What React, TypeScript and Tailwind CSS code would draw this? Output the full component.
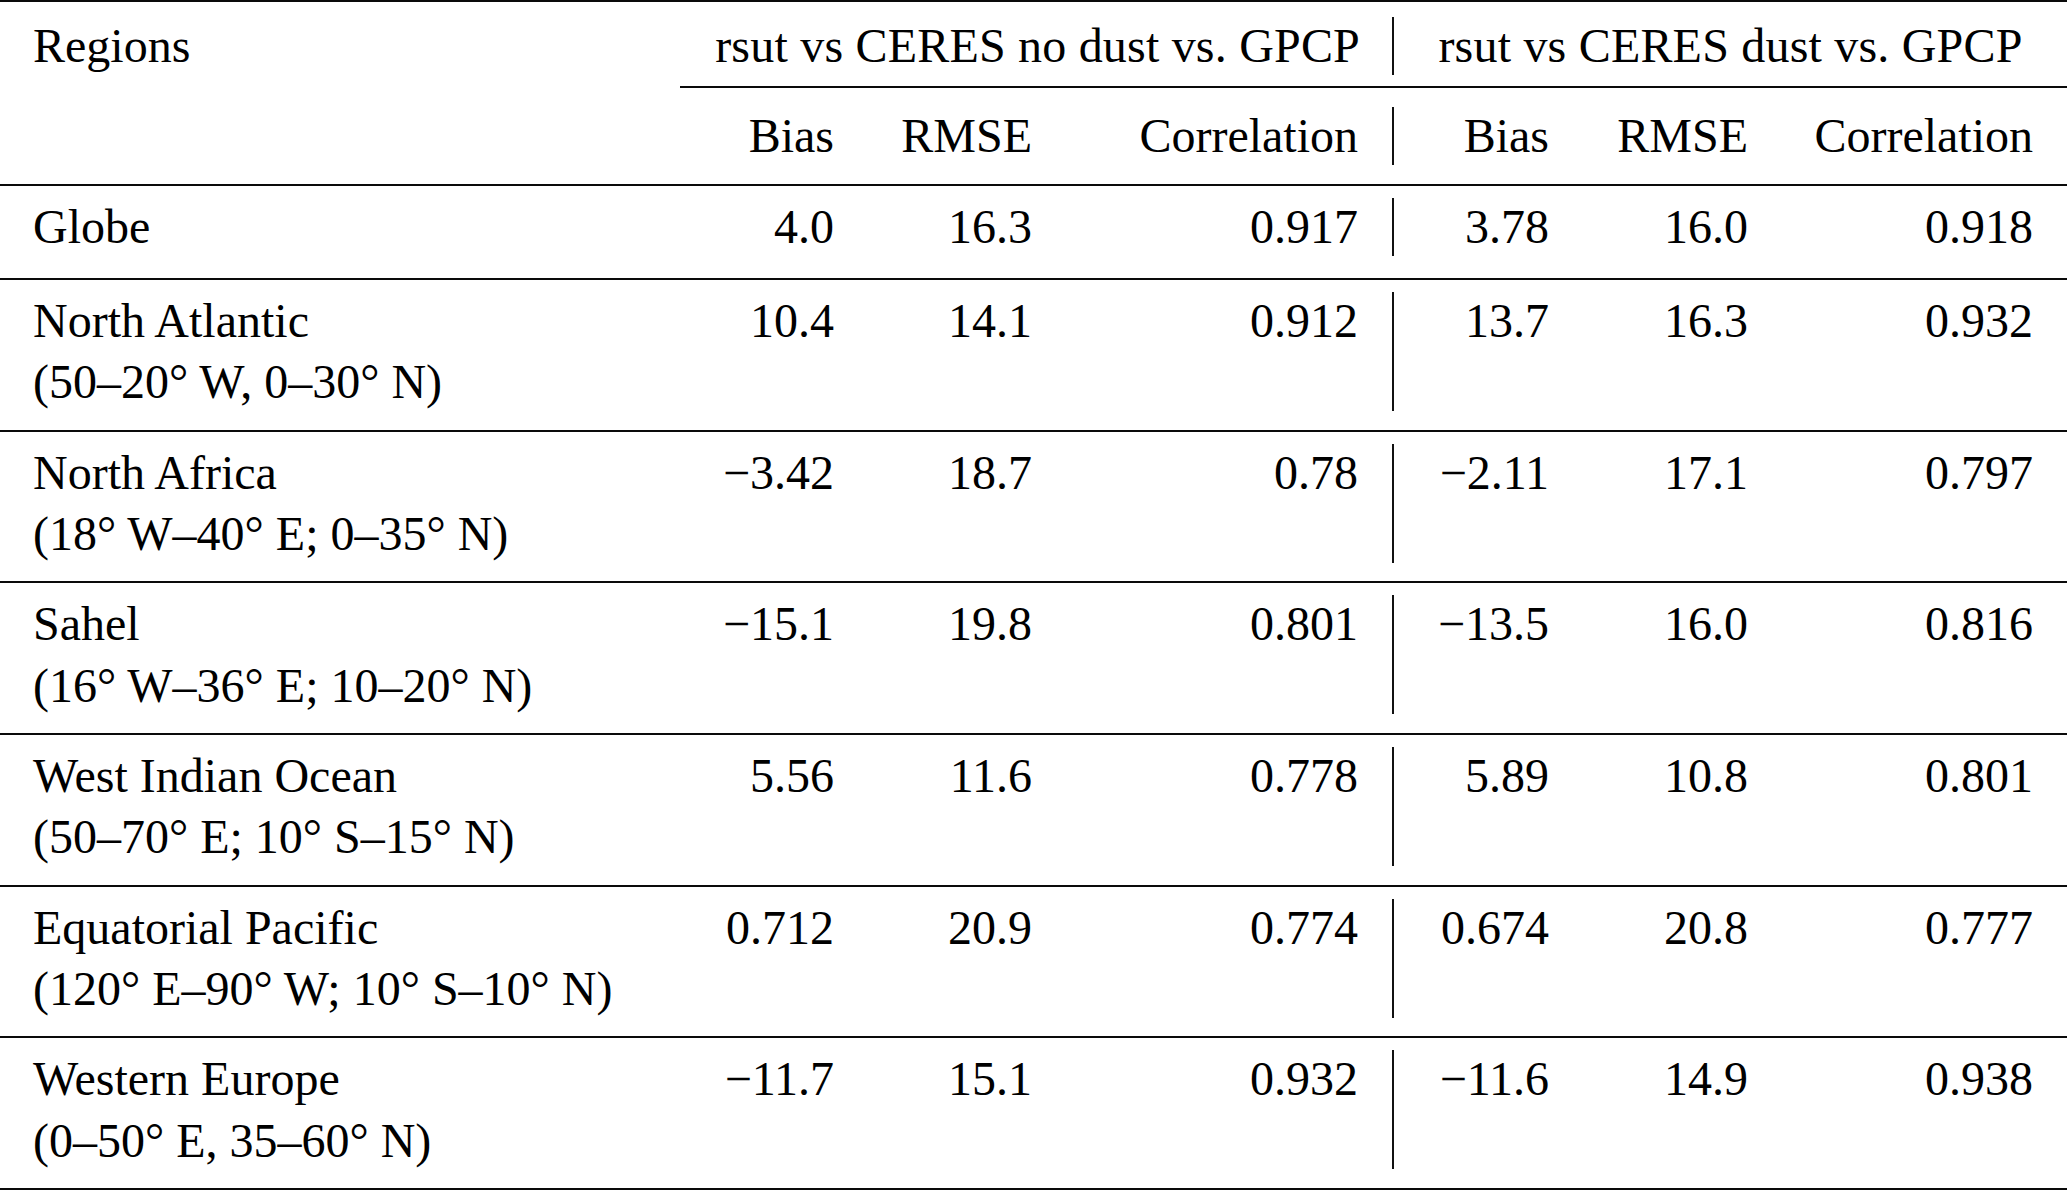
import React from "react";

type Row = {
  name: string;
  sub?: string;
  a: [string, string, string];
  b: [string, string, string];
};

const rows: Row[] = [
  { name: "Globe", a: ["4.0", "16.3", "0.917"], b: ["3.78", "16.0", "0.918"] },
  { name: "North Atlantic", sub: "(50–20° W, 0–30° N)", a: ["10.4", "14.1", "0.912"], b: ["13.7", "16.3", "0.932"] },
  { name: "North Africa", sub: "(18° W–40° E; 0–35° N)", a: ["−3.42", "18.7", "0.78"], b: ["−2.11", "17.1", "0.797"] },
  { name: "Sahel", sub: "(16° W–36° E; 10–20° N)", a: ["−15.1", "19.8", "0.801"], b: ["−13.5", "16.0", "0.816"] },
  { name: "West Indian Ocean", sub: "(50–70° E; 10° S–15° N)", a: ["5.56", "11.6", "0.778"], b: ["5.89", "10.8", "0.801"] },
  { name: "Equatorial Pacific", sub: "(120° E–90° W; 10° S–10° N)", a: ["0.712", "20.9", "0.774"], b: ["0.674", "20.8", "0.777"] },
  { name: "Western Europe", sub: "(0–50° E, 35–60° N)", a: ["−11.7", "15.1", "0.932"], b: ["−11.6", "14.9", "0.938"] },
];

function Rule() {
  return <div className="h-[2px] w-full bg-[#0a0a0a]" />;
}

export default function App() {
  return (
    <div className="w-[2067px] h-[1190px] bg-white text-black font-['Liberation_Serif','Times_New_Roman',serif] text-[48px] leading-[57.67px] overflow-hidden">
      <Rule />
      {/* header */}
      <div className="flex">
        <div className="w-[680px] pl-[33px] pt-[15px]">Regions</div>
        <div className="flex-1 flex flex-col">
          <div className="grid grid-cols-[680px_32px_2px_673px] pt-[15px] pb-[11.33px]">
            <div className="text-right whitespace-nowrap tracking-[0.2px]">rsut vs CERES no dust vs. GPCP</div>
            <div />
            <div className="bg-[#111]" />
            <div className="text-center whitespace-nowrap tracking-[0.2px]">rsut vs CERES dust vs. GPCP</div>
          </div>
          <Rule />
          <div className="grid grid-cols-[154px_198px_326px_34px_2px_155px_199px_285px_34px] pt-[19px] pb-[19.33px]">
            <div className="text-right">Bias</div>
            <div className="text-right">RMSE</div>
            <div className="text-right">Correlation</div>
            <div />
            <div className="bg-[#111]" />
            <div className="text-right">Bias</div>
            <div className="text-right">RMSE</div>
            <div className="text-right">Correlation</div>
            <div />
          </div>
        </div>
      </div>
      <Rule />
      {rows.map((r) => (
        <React.Fragment key={r.name}>
          <div
            className={
              r.sub
                ? "grid grid-cols-[680px_154px_198px_326px_34px_2px_155px_199px_285px_34px] pt-[12px] pb-[18.83px]"
                : "grid grid-cols-[680px_154px_198px_326px_34px_2px_155px_199px_285px_34px] pt-[12px] pb-[22.33px]"
            }
          >
            <div className="pl-[33px] whitespace-nowrap">
              <div>{r.name}</div>
              {r.sub && <div className="mt-[3.5px]">{r.sub}</div>}
            </div>
            <div className="text-right">{r.a[0]}</div>
            <div className="text-right">{r.a[1]}</div>
            <div className="text-right">{r.a[2]}</div>
            <div />
            <div className="bg-[#111]" />
            <div className="text-right">{r.b[0]}</div>
            <div className="text-right">{r.b[1]}</div>
            <div className="text-right">{r.b[2]}</div>
            <div />
          </div>
          <Rule />
        </React.Fragment>
      ))}
    </div>
  );
}
